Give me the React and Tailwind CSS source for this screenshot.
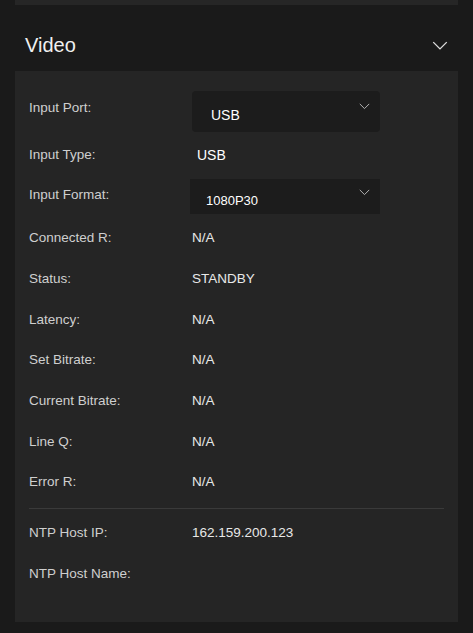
export default function App() {
  const Chev = ({ w = 14, c = "#ddd" }) => (
    <svg width={w} height={w / 2 + 1} viewBox="0 0 14 8" fill="none" stroke={c} strokeWidth="1.2">
      <path d="M1 1l6 6 6-6" />
    </svg>
  );
  const rows = [
    ["Connected R:", "N/A"],
    ["Status:", "STANDBY"],
    ["Latency:", "N/A"],
    ["Set Bitrate:", "N/A"],
    ["Current Bitrate:", "N/A"],
    ["Line Q:", "N/A"],
    ["Error R:", "N/A"],
  ];
  return (
    <div className="w-[473px] h-[633px] bg-[#1a1a1a] overflow-hidden" style={{ fontFamily: "'Liberation Sans', Arial, sans-serif" }}>
      <div className="mx-[15px] h-[5px] bg-[#262626]" />
      <div className="flex items-center justify-between pl-[25px] pr-[25px] h-[66px] pt-[14px]">
        <span className="text-[20px] text-[#f0f0f0]">Video</span>
        <Chev w={16} />
      </div>
      <div className="mx-[15px] h-[551px] bg-[#252525] pl-[14px] pr-[14px] text-[13.5px] text-[#cfcfcf]">
        <div className="h-[20px]" />
        <div className="flex items-center h-[41px]">
          <span className="w-[163px] mt-[-6px]">Input Port:</span>
          <div className="w-[188px] h-[41px] rounded-[4px] bg-[#1c1c1c] flex items-start justify-between pl-[19px] pr-[10px] pt-[14px] text-[14px] text-white">
            <span>USB</span>
            <div className="mt-[-2px]"><Chev w={11} c="#bbb" /></div>
          </div>
        </div>
        <div className="flex items-center h-[47px]">
          <span className="w-[168px]">Input Type:</span>
          <span className="text-[14px] text-white">USB</span>
        </div>
        <div className="flex items-center h-[35px]">
          <span className="w-[161px] mt-[-3px]">Input Format:</span>
          <div className="w-[190px] h-[35px] bg-[#1c1c1c] flex items-start justify-between pl-[16px] pr-[10px] pt-[12px] text-[13px] text-white">
            <span>1080P30</span>
            <div className="mt-[-2px]"><Chev w={11} c="#bbb" /></div>
          </div>
        </div>
        <div className="h-[4px]" />
        {rows.map(([l, v]) => (
          <div key={l} className="flex items-center h-[40.7px]">
            <span className="w-[163px]">{l}</span>
            <span className="text-[#e8e8e8]">{v}</span>
          </div>
        ))}
        <div className="h-[5px]" />
        <div className="h-px bg-[#3a3a3a]" />
        <div className="flex items-center h-[48px]">
          <span className="w-[163px]">NTP Host IP:</span>
          <span className="text-[#e8e8e8]">162.159.200.123</span>
        </div>
        <div className="flex items-center h-[34px]">
          <span className="w-[163px]">NTP Host Name:</span>
        </div>
      </div>
    </div>
  );
}
